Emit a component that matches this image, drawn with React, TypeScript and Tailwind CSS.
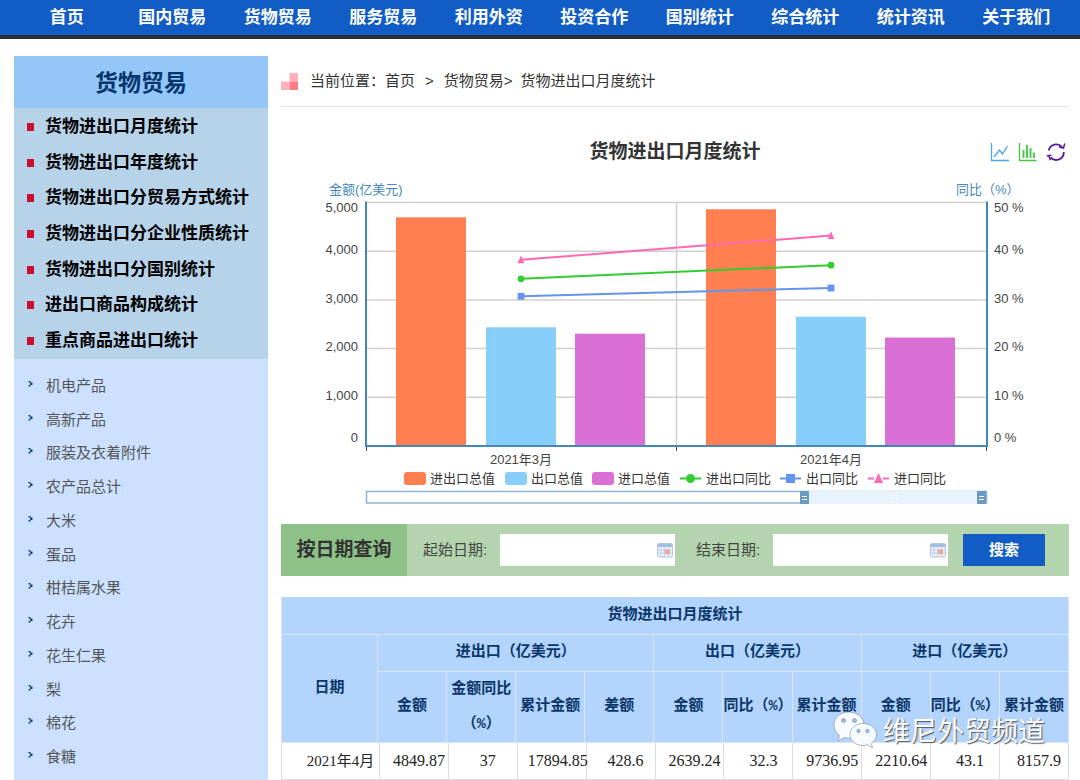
import React from "react";

const NAV = ["首页", "国内贸易", "货物贸易", "服务贸易", "利用外资", "投资合作", "国别统计", "综合统计", "统计资讯", "关于我们"];

const REPORTS = [
  "货物进出口月度统计",
  "货物进出口年度统计",
  "货物进出口分贸易方式统计",
  "货物进出口分企业性质统计",
  "货物进出口分国别统计",
  "进出口商品构成统计",
  "重点商品进出口统计",
];

const GOODS = ["机电产品", "高新产品", "服装及衣着附件", "农产品总计", "大米", "蛋品", "柑桔属水果", "花卉", "花生仁果", "梨", "棉花", "食糖"];

const PLOT = { left: 85, right: 705, top: 32, bottom: 275 };
const PLOT_HEIGHT = PLOT.bottom - PLOT.top;

const BARS = [
  { x: 115, value: 4685, color: "#ff7f50" },
  { x: 205, value: 2422, color: "#87cefa" },
  { x: 294, value: 2290, color: "#da70d6" },
  { x: 425, value: 4849.87, color: "#ff7f50" },
  { x: 515, value: 2639.24, color: "#87cefa" },
  { x: 604, value: 2210.64, color: "#da70d6" },
];

type Shape = "circle" | "square" | "triangle";

const LINES: { name: string; color: string; shape: Shape; values: [number, number]; legendX: number }[] = [
  { name: "进出口同比", color: "#32cd32", shape: "circle", values: [34.2, 37], legendX: 399 },
  { name: "出口同比", color: "#6495ed", shape: "square", values: [30.6, 32.3], legendX: 499 },
  { name: "进口同比", color: "#ff69b4", shape: "triangle", values: [38.1, 43.1], legendX: 587 },
];

const BAR_LEGEND = [
  { name: "进出口总值", color: "#ff7f50", x: 123 },
  { name: "出口总值", color: "#87cefa", x: 224 },
  { name: "进口总值", color: "#da70d6", x: 311 },
];

const AXIS_LABELS = [
  { left: "5,000", right: "50 %", y: 42 },
  { left: "4,000", right: "40 %", y: 84 },
  { left: "3,000", right: "30 %", y: 133 },
  { left: "2,000", right: "20 %", y: 181 },
  { left: "1,000", right: "10 %", y: 230 },
  { left: "0", right: "0 %", y: 272 },
];

function Marker({ shape, x, y, r, color }: { shape: Shape; x: number; y: number; r: number; color: string }) {
  if (shape === "circle") return <circle cx={x} cy={y} r={r} fill={color} />;
  if (shape === "square") return <rect x={x - r} y={y - r} width={r * 2} height={r * 2} fill={color} />;
  return <path d={`M${x} ${y - r - 1}L${x + r} ${y + r}H${x - r}Z`} fill={color} />;
}

function Chart() {
  const percentY = (v: number) => PLOT.bottom - (v / 50) * PLOT_HEIGHT;
  return (
    <svg viewBox="0 0 788 340" className="block w-full" role="img" aria-label="货物进出口月度统计" fontSize="13" fill="#444">
      <text x="48" y="24" fill="#4488bb">金额(亿美元)</text>
      <text x="675" y="24" fill="#4488bb">同比（%）</text>
      <g stroke="#d0d0d0" strokeWidth="1.5">
        {[0, 1, 2, 3, 4].map((i) => (
          <path key={i} d={`M${PLOT.left} ${PLOT.top + 0.5 + i * 48.7}H${PLOT.right}`} />
        ))}
        <path d="M395.5 32V276" />
      </g>
      {BARS.map((b) => {
        const h = (b.value / 5000) * PLOT_HEIGHT;
        return <rect key={b.x} x={b.x} y={PLOT.bottom - h} width="70" height={h} fill={b.color} />;
      })}
      <path d="M85.5 276V281M395.5 276V281M705.5 276V281" stroke="#444" />
      <path d="M85 31.5V276H706V31.5" fill="none" stroke="#4488bb" strokeWidth="2" />
      {LINES.map((l) => (
        <g key={l.name}>
          <path d={`M240 ${percentY(l.values[0])}L550 ${percentY(l.values[1])}`} stroke={l.color} strokeWidth="2" />
          <Marker shape={l.shape} x={240} y={percentY(l.values[0])} r={3.4} color={l.color} />
          <Marker shape={l.shape} x={550} y={percentY(l.values[1])} r={3.4} color={l.color} />
        </g>
      ))}
      {AXIS_LABELS.map((a) => (
        <g key={a.left}>
          <text x="77" y={a.y} textAnchor="end">{a.left}</text>
          <text x="713" y={a.y}>{a.right}</text>
        </g>
      ))}
      <text x="240" y="294" textAnchor="middle">2021年3月</text>
      <text x="550" y="294" textAnchor="middle">2021年4月</text>
      {BAR_LEGEND.map((b) => (
        <g key={b.name}>
          <rect x={b.x} y="302" width="22" height="13" rx="3" fill={b.color} />
          <text x={b.x + 26} y="313" fill="#333">{b.name}</text>
        </g>
      ))}
      {LINES.map((l) => (
        <g key={l.name}>
          <path d={`M${l.legendX} 308.5h6m9 0h6`} stroke={l.color} strokeWidth="2" />
          <Marker shape={l.shape} x={l.legendX + 10.5} y={308.5} r={4.5} color={l.color} />
          <text x={l.legendX + 26} y="313" fill="#333">{l.name}</text>
        </g>
      ))}
      <rect x="85.5" y="321.5" width="620" height="11.5" fill="#fff" stroke="#8fb4d3" strokeWidth="1.5" />
      <rect x="528" y="320.5" width="170" height="13.5" fill="#e7f2fc" />
      <path d="M610 325.5h7M610 328.5h7" stroke="#fff" strokeDasharray="1.5 1" />
      {[519, 696].map((x) => (
        <g key={x}>
          <rect x={x} y="321" width="9" height="13" fill="#6a9bc5" />
          <path d={`M${x + 2} 326.5h5M${x + 2} 329.5h5`} stroke="#fff" />
        </g>
      ))}
    </svg>
  );
}

function Calendar() {
  return (
    <svg viewBox="0 0 16 15" className="h-[15px] w-4" aria-hidden="true">
      <rect x="0.5" y="0.5" width="15" height="13.5" rx="1.5" fill="#eaf0fa" stroke="#b4c3dc" />
      <path d="M1 1h14v3H1z" fill="#a3bde6" />
      <path d="M1 7h14M1 10h14M4 4v9.500M7.500 4v9.500M11.500 4v9.500" stroke="#b9cdec" strokeWidth="0.8" />
      <rect x="8" y="6.500" width="5" height="4.500" fill="#f3a593" />
    </svg>
  );
}

function DateField({ id, label }: { id: string; label: string }) {
  return (
    <div className="flex items-center gap-3">
      <label htmlFor={id} className="w-[65px] whitespace-nowrap text-[15px] text-[#444]">{label}</label>
      <div className="flex h-8 w-[175px] items-center bg-white pr-0.5">
        <input id={id} type="text" className="h-full min-w-0 flex-1 bg-transparent px-2 text-sm outline-none" />
        <Calendar />
      </div>
    </div>
  );
}

function Toolbar() {
  return (
    <div className="absolute right-[3px] top-0 flex h-6 items-center gap-2">
      <button type="button" aria-label="折线图" className="h-5 w-5">
        <svg viewBox="0 0 20 20" fill="none" stroke="#4ba3f5" strokeWidth="1.3">
          <path d="M1.500 1V18.500H19M4 15L9.500 8L12.500 12L17.500 4" />
        </svg>
      </button>
      <button type="button" aria-label="柱状图" className="h-5 w-5">
        <svg viewBox="0 0 20 20" fill="none" stroke="#45c945">
          <path d="M1.500 1V18.500H18.500" strokeWidth="1.3" />
          <path d="M5.500 8V16M9 3V16M12.500 6V16M16 10.500V16" strokeWidth="1.9" />
        </svg>
      </button>
      <button type="button" aria-label="还原" className="h-5 w-5">
        <svg viewBox="0 0 20 20" fill="none" stroke="#5a1d96" strokeWidth="1.9">
          <path d="M2.800 8.500A7.500 7.500 0 0 1 16 5.200M17.700 10A7.500 7.500 0 0 1 4.500 15.300" />
          <path d="M18.800 1.500L17.500 6L13 5M0.800 13.800L5.500 13.300M2.500 13.500L4.500 18.200" strokeWidth="1.5" />
        </svg>
      </button>
    </div>
  );
}

function Watermark() {
  return (
    <div className="pointer-events-none absolute bottom-[27px] right-6 flex items-center gap-1.5">
      <svg viewBox="0 0 44 38" className="mb-1 h-[38px] w-11" aria-hidden="true">
        <g stroke="#8796a8" strokeWidth="0.7">
          <path d="M15.500 1C7.500 1 1 6.500 1 14c0 4.500 2 8 5.500 10.500L5 30l6.500-3.500c9 2.500 19.500-2 19.500-12.500C31 6.500 24 1 15.500 1Z" fill="#f8fbff" />
          <path d="M30 12.500c-7.500 0-13 5-13 11s5.500 11 13 11c1.500 0 3-.2 4.500-.7L39.500 37l-1.200-4.500C41.500 30.500 43.500 27 43.500 23.500c0-6-6-11-13.500-11Z" fill="#f8fbff" />
        </g>
        <g fill="#9fbfe3" stroke="#6c87a5" strokeWidth="0.600">
          <circle cx="10.500" cy="9.500" r="2" />
          <circle cx="21.500" cy="9.500" r="2" />
          <circle cx="25.500" cy="20" r="1.700" />
          <circle cx="34.500" cy="20" r="1.700" />
        </g>
      </svg>
      <span className="whitespace-nowrap text-[27px] leading-10 text-white [text-shadow:1px_1px_1px_#555]">维尼外贸频道</span>
    </div>
  );
}

const SUB_HEADS = ["金额", "金额同比（%）", "累计金额", "差额", "金额", "同比（%）", "累计金额", "金额", "同比（%）", "累计金额"];
const ROW = ["4849.87", "37", "17894.85", "428.6", "2639.24", "32.3", "9736.95", "2210.64", "43.1", "8157.9"];

function StatsTable() {
  const th = "border border-[#d9e6f5] p-0 font-bold";
  return (
    <div className="relative">
      <table className="w-full table-fixed border-collapse bg-[#b3d4fd] font-['Liberation_Mono','Noto_Sans_CJK_SC',monospace] text-[15px] leading-[35px] text-[#0b3768]">
        <colgroup>
          <col className="w-24" />
          {SUB_HEADS.map((_, i) => <col key={i} />)}
        </colgroup>
        <thead>
          <tr className="h-[37px]"><th colSpan={11} className={`${th} border-t-0`}>货物进出口月度统计</th></tr>
          <tr className="h-[37px]">
            <th rowSpan={2} className={th}>日期</th>
            <th colSpan={4} className={th}>进出口（亿美元）</th>
            <th colSpan={3} className={th}>出口（亿美元）</th>
            <th colSpan={3} className={th}>进口（亿美元）</th>
          </tr>
          <tr>
            {SUB_HEADS.map((h, i) => (
              <th key={i} className={`${th} ${i === 1 ? "" : "whitespace-nowrap"}`}>
                {i === 1 ? <>金额同比<br />（%）</> : h}
              </th>
            ))}
          </tr>
        </thead>
      </table>
      <table aria-label="月度数据" className="w-full table-fixed border-collapse bg-white font-['Liberation_Serif','Noto_Sans_CJK_SC',serif] text-base leading-9 text-[#222]">
        <colgroup>
          <col className="w-[98px]" />
          {ROW.map((_, i) => <col key={i} />)}
        </colgroup>
        <tbody>
          <tr>
            <td className="border border-t-0 border-[#ddd] p-0 pl-5 text-center text-[15px]">2021年4月</td>
            {ROW.map((v, i) => (
              <td key={i} className="border border-t-0 border-[#ddd] p-0 pl-2.5 text-center">{v}</td>
            ))}
          </tr>
        </tbody>
      </table>
      <Watermark />
    </div>
  );
}

function Sidebar() {
  return (
    <aside className="w-[254px] shrink-0 bg-[#cbe1ff]">
      <h2 className="flex h-[52px] items-center justify-center bg-[#94c7f8] pt-0.5 text-[23px] font-bold text-[#04356b]">货物贸易</h2>
      <ul className="grid h-[251px] auto-rows-fr bg-[#b7d3ea] pt-px">
        {REPORTS.map((r) => (
          <li key={r} className="flex items-center gap-[11px] pl-[13px]">
            <span className="h-2 w-[7px] bg-[#c8102e]" />
            <a href="#" className="text-[17px] font-bold leading-6 text-black">{r}</a>
          </li>
        ))}
      </ul>
      <ul className="grid h-[415px] auto-rows-fr pt-2.5">
        {GOODS.map((g) => (
          <li key={g} className="flex items-center gap-3 pl-3.5">
            <svg viewBox="0 0 6 8" className="mb-1 h-2 w-1.5" aria-hidden="true">
              <path d="M0.500 1h2v1.500h2v2.500h-2V6.500h-2V5h1.500V2.500H0.500Z" fill="#14437a" />
            </svg>
            <a href="#" className="text-[15px] leading-6 text-[#555]">{g}</a>
          </li>
        ))}
      </ul>
    </aside>
  );
}

export default function App() {
  return (
    <div className="min-h-screen overflow-hidden bg-white font-['Liberation_Sans','Noto_Sans_CJK_SC',sans-serif]">
      <nav className="border-b-4 border-[#2b2d35] bg-[#125dc5] pl-3.5 pr-[11px]">
        <ul className="flex h-[35px] items-center">
          {NAV.map((n) => (
            <li key={n} className="flex-1 text-center">
              <a href="#" className="text-[17px] font-bold leading-6 text-white">{n}</a>
            </li>
          ))}
        </ul>
      </nav>
      <div className="flex gap-[13px] pl-3.5 pr-[11px] pt-[17px]">
        <Sidebar />
        <main className="min-w-0 flex-1">
          <div className="flex h-[51px] items-center border-b border-[#e5e5e5] text-[15px] text-[#333]">
            <svg viewBox="0 0 17 17" className="mr-3 h-[17px] w-[17px]" aria-hidden="true">
              <path d="M8.500 0H17V8.500H8.500ZM0 8.500H8.500V17H0Z" fill="#ffb0b8" />
              <path d="M8.500 8.500H17V17H8.500Z" fill="#ff7d87" />
            </svg>
            <span>当前位置：</span>
            <a href="#">首页</a>
            <span className="mx-2.5">&gt;</span>
            <a href="#">货物贸易</a>
            <span className="mr-2">&gt;</span>
            <span>货物进出口月度统计</span>
          </div>
          <section className="pb-3.5">
            <div className="relative mt-[33px]">
              <h1 className="text-center text-[19px] font-bold leading-6 text-[#333]">货物进出口月度统计</h1>
              <Toolbar />
            </div>
            <div className="mt-1.5">
              <Chart />
            </div>
          </section>
          <form className="flex h-[52px] items-center bg-[#b3d4ae]" onSubmit={(e) => e.preventDefault()}>
            <h2 className="mr-4 flex h-full w-[126px] items-center justify-center bg-[#8ec187] text-[19px] font-bold text-[#333]">按日期查询</h2>
            <div className="flex items-center gap-[21px]">
              <DateField id="start" label="起始日期:" />
              <DateField id="end" label="结束日期:" />
            </div>
            <button type="submit" className="ml-[15px] h-8 w-[82px] bg-[#125dc5] text-[15px] font-bold text-white">搜索</button>
          </form>
          <div className="mt-[21px]">
            <StatsTable />
          </div>
        </main>
      </div>
    </div>
  );
}
